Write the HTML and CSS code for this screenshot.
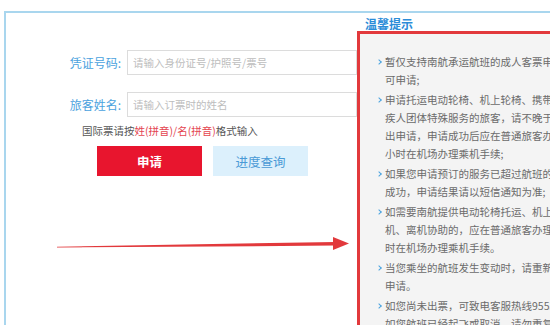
FILE: index.html
```html
<!DOCTYPE html>
<html lang="zh-CN">
<head>
<meta charset="utf-8">
<title>特殊服务申请</title>
<link rel="stylesheet" href="styles.css">
</head>
<body>
<div class="frame">
  <div class="form">
    <div class="row">
      <label class="label">凭证号码:</label>
      <input class="field" type="text" placeholder="请输入身份证号/护照号/票号">
    </div>
    <div class="row row2">
      <label class="label">旅客姓名:</label>
      <input class="field" type="text" placeholder="请输入订票时的姓名">
    </div>
    <div class="hint">国际票请按<span class="red">姓(拼音)/名(拼音)</span>格式输入</div>
    <div class="buttons">
      <button class="btn btn-apply">申请</button>
      <button class="btn btn-query">进度查询</button>
    </div>
  </div>
  <div class="tips">
    <div class="tips-title">温馨提示</div>
    <div class="panel">
      <ul class="list">
        <li><span>暂仅支持南航承运航班的成人客票申请办理，儿童及婴儿客票暂不</span><span>可申请;</span></li>
        <li><span>申请托运电动轮椅、机上轮椅、携带导盲犬等特殊服务或残</span><span>疾人团体特殊服务的旅客，请不晚于航班起飞前48小时提</span><span>出申请，申请成功后应在普通旅客办理乘机手续截止前1</span><span>小时在机场办理乘机手续;</span></li>
        <li><span>如果您申请预订的服务已超过航班的服务限额，则申请不</span><span>成功，申请结果请以短信通知为准;</span></li>
        <li><span>如需要南航提供电动轮椅托运、机上轮椅、担架服务或登</span><span>机、离机协助的，应在普通旅客办理乘机手续截止前1小</span><span>时在机场办理乘机手续。</span></li>
        <li><span>当您乘坐的航班发生变动时，请重新提交特殊服务</span><span>申请。</span></li>
        <li><span>如您尚未出票，可致电客服热线95539办理。</span><span>如您航班已经起飞或取消，请勿重复申请。</span></li>
      </ul>
    </div>
  </div>
</div>
<svg class="arrow" width="550" height="325" viewBox="0 0 550 325">
  <polygon points="57,246.7 335,242 335,245.6 57,247.5" fill="#e2393c"/>
  <polygon points="333,237 349,243.6 333,250" fill="#e2393c"/>
</svg>
</body>
</html>
```

FILE: styles.css
```css
html, body {
  margin: 0;
  padding: 0;
  background: #ffffff;
  width: 550px;
  height: 325px;
  overflow: hidden;
  font-family: "Noto Sans CJK SC", "Noto Sans", sans-serif;
}

.frame {
  margin: 11px 0 0 4px;
  border-top: 2px solid #a9d6ee;
  border-left: 2px solid #a9d6ee;
  display: flex;
  height: 330px;
  width: 600px;
}

.form {
  width: 351px;
  flex: none;
  padding-top: 37px;
  box-sizing: border-box;
}

.row {
  display: flex;
  align-items: center;
  gap: 6px;
}

.row2 {
  margin-top: 17px;
}

.label {
  width: 115px;
  text-align: right;
  font-size: 12px;
  color: #4aa2de;
  line-height: 16px;
}

.field {
  flex: 1;
  height: 25px;
  box-sizing: border-box;
  border: 1px solid #dcdcdc;
  padding: 0 5px;
  font-family: inherit;
  font-size: 10.5px;
  outline: none;
  background: #fff;
}

.field::placeholder {
  color: #bdbdbd;
}

.hint {
  margin-top: 7px;
  padding-left: 76px;
  font-size: 10.5px;
  line-height: 13px;
  color: #555555;
}

.red {
  color: #e4454f;
}

.buttons {
  display: flex;
  gap: 11px;
  margin-top: 9px;
  padding-left: 91px;
}

.btn {
  height: 30px;
  border: none;
  font-family: inherit;
  font-size: 12.5px;
  padding: 0;
  cursor: pointer;
}

.btn-apply {
  width: 105px;
  background: #e8152e;
  color: #ffffff;
  font-weight: bold;
}

.btn-query {
  width: 95px;
  background: #dcf0fc;
  color: #4a9ad6;
}

.tips {
  flex: none;
  width: 240px;
  padding-top: 4px;
}

.tips-title {
  padding-left: 8px;
  font-size: 12px;
  line-height: 14px;
  font-weight: bold;
  color: #2b8cd8;
}

.panel {
  border: 3px solid #e2393c;
  background: #f4f4f4;
  height: 320px;
  padding: 19px 0 0 17px;
  box-sizing: border-box;
}

.list {
  list-style: none;
  margin: 0;
  padding: 0;
}

.list li {
  position: relative;
  padding-left: 8px;
  margin-bottom: 2px;
  font-size: 10.5px;
  line-height: 18px;
  color: #6b6b6b;
}

.list li span {
  display: block;
  white-space: nowrap;
}

.list li::before {
  content: "";
  position: absolute;
  left: 0;
  top: 7px;
  width: 3px;
  height: 3px;
  border-top: 1.5px solid #4aa3df;
  border-right: 1.5px solid #4aa3df;
  transform: rotate(45deg);
}

.arrow {
  position: absolute;
  left: 0;
  top: 0;
  pointer-events: none;
}
```
